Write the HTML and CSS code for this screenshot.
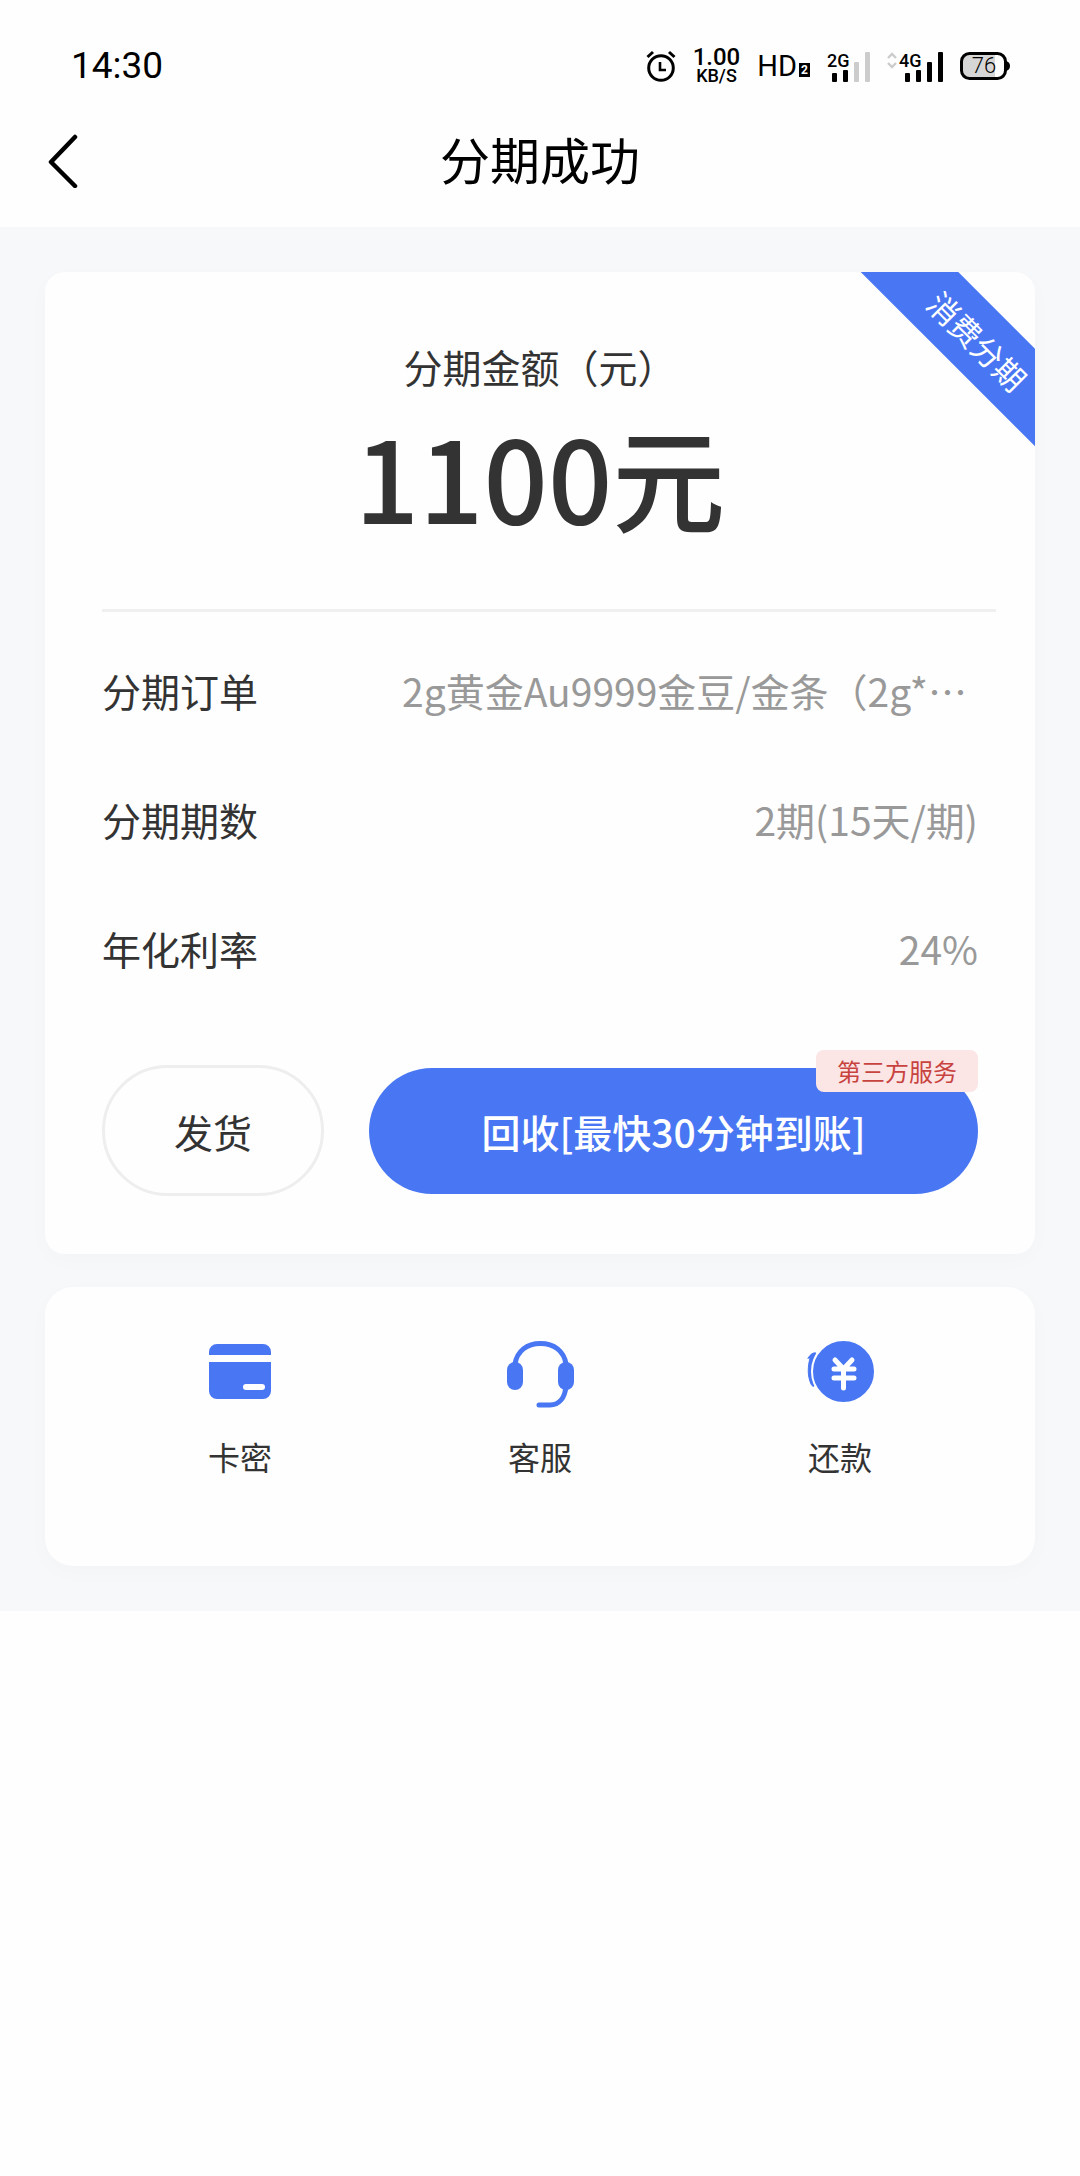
FILE: index.html
```html
<!DOCTYPE html>
<html lang="zh-CN">
<head>
<meta charset="utf-8">
<meta name="viewport" content="width=device-width, initial-scale=1">
<title>分期成功</title>
<link rel="stylesheet" href="styles.css">
</head>
<body>
<header>
  <div class="status">
    <time class="clock">14:30</time>
    <div class="indicators">
      <svg class="alarm" width="30" height="34" viewBox="0 0 30 34" fill="none" stroke="#000">
        <circle cx="15" cy="19" r="12.3" stroke-width="3"/>
        <path d="M14 13v8h6" stroke-width="2.6"/>
        <path d="M1.5 8 7 3M28.5 8 23 3" stroke-width="3"/>
      </svg>
      <div class="speed"><span class="speed-value">1.00</span><span class="speed-unit">KB/S</span></div>
      <div class="hd"><span>HD</span><span class="sim">2</span></div>
      <svg class="signal" width="43" height="34" viewBox="0 0 43 34">
        <text x="0" y="18" class="net">2G</text>
        <g fill="#000"><rect x="5" y="24" width="5" height="9" rx="1"/><rect x="16" y="21" width="5" height="12" rx="1"/></g>
        <g fill="#ccc"><rect x="27" y="13" width="5" height="20" rx="1"/><rect x="38" y="3" width="5" height="30" rx="1"/></g>
      </svg>
      <svg class="signal" width="56" height="34" viewBox="0 0 56 34">
        <path d="M1 9l4-4 4 4M1 14l4 4 4-4" fill="none" stroke="#ccc" stroke-width="2.4"/>
        <text x="12" y="18" class="net">4G</text>
        <g fill="#000"><rect x="18" y="24" width="5" height="9" rx="1"/><rect x="29" y="21" width="5" height="12" rx="1"/><rect x="40" y="13" width="5" height="20" rx="1"/><rect x="51" y="3" width="5" height="30" rx="1"/></g>
      </svg>
      <svg class="battery" width="50" height="28" viewBox="0 0 50 28">
        <path d="M9 3h26v22H9a6 6 0 0 1-6-6V9a6 6 0 0 1 6-6z" fill="#d6d6d6"/>
        <rect x="1.5" y="1.5" width="44" height="25" rx="8" fill="none" stroke="#000" stroke-width="3"/>
        <path d="M46 9q4 1 4 5t-4 5z" fill="#000"/>
        <text x="24" y="21" text-anchor="middle" class="level">76</text>
      </svg>
    </div>
  </div>
  <nav class="nav">
    <button class="back" type="button" aria-label="返回">
      <svg width="32" height="54" viewBox="0 0 32 54" fill="none" stroke="#000" stroke-width="4.5" stroke-linecap="round" stroke-linejoin="round"><path d="M28 3 4 28 28 52"/></svg>
    </button>
    <h1 class="title">分期成功</h1>
  </nav>
</header>
<main class="page">
  <section class="card order">
    <div class="corner"><span class="ribbon">消费分期</span></div>
    <p class="amount-label">分期金额（元）</p>
    <p class="amount">1100元</p>
    <hr class="divider">
    <dl class="details">
      <div class="row"><dt>分期订单</dt><dd class="product">2g黄金Au9999金豆/金条（2g*…</dd></div>
      <div class="row"><dt>分期期数</dt><dd>2期(15天/期)</dd></div>
      <div class="row"><dt>年化利率</dt><dd>24%</dd></div>
    </dl>
    <div class="actions">
      <button class="btn btn-plain" type="button">发货</button>
      <div class="recycle">
        <button class="btn btn-primary" type="button">回收[最快30分钟到账]</button>
        <span class="badge">第三方服务</span>
      </div>
    </div>
  </section>
  <section class="card shortcuts">
    <a class="shortcut" href="#card">
      <svg width="72" height="72" viewBox="0 0 72 72">
        <path d="M5 19v-3a8 8 0 0 1 8-8h46a8 8 0 0 1 8 8v3zM5 26h62v29a8 8 0 0 1-8 8H13a8 8 0 0 1-8-8z" fill="#4977f3"/>
        <rect x="39" y="48" width="22" height="6" rx="3" fill="#fff"/>
      </svg>
      <span>卡密</span>
    </a>
    <a class="shortcut" href="#service">
      <svg width="72" height="72" viewBox="0 0 72 72">
        <g fill="none" stroke="#4977f3" stroke-width="5" stroke-linecap="round"><path d="M11 28C13 15 23 7.500 36.500 7.500S60 15 62 28"/><path d="M62 50c-1 12-7 19-16 19H35"/></g>
        <g fill="#4977f3"><rect x="3" y="26" width="16" height="28" rx="8"/><rect x="54" y="26" width="16" height="28" rx="8"/></g>
      </svg>
      <span>客服</span>
    </a>
    <a class="shortcut" href="#repay">
      <svg width="72" height="72" viewBox="0 0 72 72" fill="none" stroke-linecap="round" stroke-linejoin="round">
        <path d="M4 22Q8 16 12 17C6 28 6 39 11 49Q9 52 7 48C3 39 4 30 6 22z" stroke="#4977f3" stroke-width="1" fill="#4977f3"/>
        <circle cx="39.500" cy="35.500" r="31.500" fill="#4977f3" stroke="#fefefe" stroke-width="2"/>
        <path d="M31 24l8.500 9L48 24M39.500 33v19M30 33h20M30 42h20" stroke="#fff" stroke-width="5"/>
      </svg>
      <span>还款</span>
    </a>
  </section>
</main>
</body>
</html>
```
FILE: styles.css
```css
* { box-sizing: border-box; }
body {
  margin: 0;
  background: #fefefe;
  color: #333;
  font-family: "Noto Sans CJK SC", sans-serif;
  font-size: 39px;
}
h1, p, dl, dd { margin: 0; }
button { font: inherit; cursor: pointer; }
svg { display: block; flex: none; }

.status {
  display: flex;
  justify-content: space-between;
  align-items: center;
  height: 86px;
  padding: 46px 70px 0 71px;
  color: #000;
  font-family: Roboto, sans-serif;
}
.clock { font-size: 37px; line-height: 40px; }
.indicators { display: flex; align-items: center; gap: 17px; }
.speed { display: flex; flex-direction: column; align-items: center; font-weight: 500; }
.speed-value { font-size: 24px; line-height: 20px; }
.speed-unit { font-size: 18px; line-height: 18px; }
.hd { display: flex; align-items: center; gap: 2px; font-size: 29px; line-height: 34px; }
.sim {
  align-self: flex-end;
  width: 11px;
  margin-bottom: 6px;
  background: #000;
  color: #fff;
  font-size: 12px;
  font-weight: 700;
  line-height: 14px;
  text-align: center;
}
.net { font-size: 18px; font-weight: 500; }
.level { font-size: 22px; font-weight: 300; }

.nav {
  position: relative;
  display: flex;
  justify-content: center;
  align-items: center;
  padding: 34px 0 31px;
}
.back {
  position: absolute;
  top: 48px;
  left: 47px;
  padding: 0;
  border: 0;
  background: none;
}
.title { color: #000; font-size: 50px; font-weight: 400; line-height: 76px; }

.page {
  display: flex;
  flex-direction: column;
  gap: 33px;
  padding: 45px;
  background: #f7f8fa;
}
.card { background: #fefefe; box-shadow: 0 6px 24px rgba(0, 0, 0, 0.02); }
.order { position: relative; padding: 65px 57px 58px; border-radius: 20px; }

.corner {
  position: absolute;
  top: 0;
  right: 0;
  width: 176px;
  height: 176px;
  overflow: hidden;
}
.ribbon {
  position: absolute;
  top: 34px;
  left: -31px;
  width: 300px;
  background: #4977f3;
  color: #fff;
  font-size: 31px;
  line-height: 69px;
  text-align: center;
  transform: rotate(45deg);
}

.amount-label { line-height: 58px; text-align: center; }
.amount { margin-top: 10px; font-size: 113px; font-weight: 500; line-height: 140px; text-align: center; }
.divider { height: 3px; margin: 64px -18px 14px 0; border: 0; background: #f0f0f0; }
.row { display: flex; justify-content: space-between; line-height: 129px; white-space: nowrap; }
.row dd { color: #999; }
.row .product { width: 576px; }

.actions { display: flex; align-items: center; gap: 45px; margin-top: 52px; }
.btn { border-radius: 66px; }
.btn-plain { width: 222px; height: 131px; border: 3px solid #eee; background: #fefefe; color: #333; }
.recycle { position: relative; flex: 1; }
.btn-primary { display: block; width: 100%; height: 126px; border: 0; background: #4977f3; color: #fff; font-weight: 500; }
.badge {
  position: absolute;
  top: -18px;
  right: 0;
  padding: 0 21px;
  border-radius: 8px;
  background: #fbe5e5;
  color: #c8433f;
  font-size: 24px;
  line-height: 42px;
}

.shortcuts {
  display: grid;
  grid-template-columns: repeat(3, 1fr);
  padding: 49px 45px 86px;
  border-radius: 28px;
}
.shortcut {
  display: flex;
  flex-direction: column;
  align-items: center;
  gap: 24px;
  color: #333;
  font-size: 32px;
  line-height: 48px;
  text-decoration: none;
}
```
